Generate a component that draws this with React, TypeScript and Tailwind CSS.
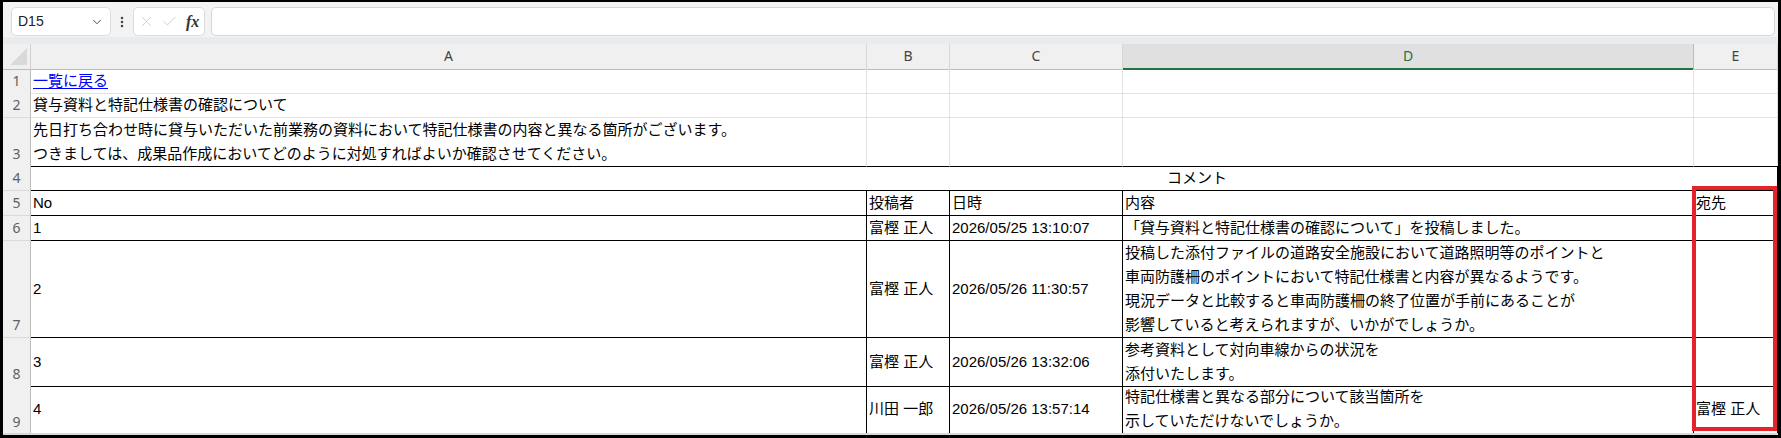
import { ChevronDown, EllipsisVertical, X, Check } from 'lucide-react';

// grid columns: row header, A, B, C, D, E
const cols = 'grid grid-cols-[28px_836px_83px_173px_571px_84px]';

const RowHead = ({ n, last }: { n: number; last?: boolean }) => (
  <div
    className={`flex items-end justify-center border-r border-r-[#bdbdbd] bg-[#f0f0f0] font-['Noto_Sans',sans-serif] text-[14px] leading-[24px] text-[#5f5f5f] ${
      last ? '' : 'border-b border-b-[#dadada]'
    }`}
  >
    {n}
  </div>
);

// plain gridline cell (rows 1-3)
const Grid = ({ children, bottom }: { children?: React.ReactNode; bottom?: boolean }) => (
  <div
    className={`flex items-center border-r border-b border-r-[#e1e1e1] px-[2px] text-[15px] leading-[24px] ${
      bottom ? 'border-b-black' : 'border-b-[#e1e1e1]'
    }`}
  >
    {children}
  </div>
);

// bordered table cell (rows 4-9)
const Cell = ({ children }: { children?: React.ReactNode }) => (
  <div className="flex items-center border-r border-b border-black px-[2px] text-[15px] leading-[24px] whitespace-nowrap">
    <div>{children}</div>
  </div>
);

const comments = [
  {
    no: '1',
    h: 'h-[25px]',
    by: '富樫 正人',
    at: '2026/05/25 13:10:07',
    body: ['\u300c貸与資料と特記仕様書の確認について」を投稿しました。'],
    to: '',
  },
  {
    no: '2',
    h: 'h-[97px]',
    by: '富樫 正人',
    at: '2026/05/26 11:30:57',
    body: [
      '投稿した添付ファイルの道路安全施設において道路照明等のポイントと',
      '車両防護柵のポイントにおいて特記仕様書と内容が異なるようです。',
      '現況データと比較すると車両防護柵の終了位置が手前にあることが',
      '影響していると考えられますが、いかがでしょうか。',
    ],
    to: '',
  },
  {
    no: '3',
    h: 'h-[47px]',
    by: '富樫 正人',
    at: '2026/05/26 13:32:06',
    body: ['参考資料として対向車線からの状況を', '添付いたします。'],
    to: '',
  },
  {
    no: '4',
    h: 'h-[48px]',
    by: '川田 一郎',
    at: '2026/05/26 13:57:14',
    body: ['特記仕様書と異なる部分について該当箇所を', '示していただけないでしょうか。'],
    to: '富樫 正人',
  },
];

export default function App() {
  return (
    <div className="relative h-[438px] w-[1781px] overflow-hidden bg-black pt-[2px] pl-[3px] pr-[3px] font-['Liberation_Sans','Noto_Sans_CJK_JP',sans-serif] text-black">
      <div className="flex flex-col bg-white">
        {/* formula bar */}
        <div className="flex h-[35px] items-start gap-[4px] bg-[#f3f3f3] pt-[5px] pl-[8px] pr-[3px]">
          <div className="flex h-[29px] w-[100px] items-center justify-between rounded-[5px] border border-[#dcdcdc] bg-white pl-[6px] pr-[6px] text-[14px] text-[#222]">
            <span>D15</span>
            <ChevronDown size={14} strokeWidth={1.6} className="text-[#444]" />
          </div>
          <div className="flex h-[29px] items-center">
            <EllipsisVertical size={14} strokeWidth={2.4} className="text-[#444]" />
          </div>
          <div className="flex h-[29px] w-[72px] items-center rounded-[5px] border border-[#dcdcdc] bg-white pl-[4px]">
            <X size={17} strokeWidth={1.1} className="text-[#c4c4c4]" />
            <Check size={17} strokeWidth={1.1} className="ml-[6px] text-[#c4c4c4]" />
            <span className="ml-[8px] font-['Liberation_Serif',serif] text-[16px] font-bold italic leading-none text-[#333]">fx</span>
          </div>
          <div className="ml-[2px] h-[29px] flex-1 rounded-[5px] border border-[#d6d6d6] bg-white" />
        </div>
        <div className="h-[7px] bg-[#e8ecef]" />

        {/* column headers */}
        <div className={`${cols} h-[25px] font-['Noto_Sans',sans-serif] text-[14px] leading-[24px] text-[#444]`}>
          <div className="relative border-r border-b border-r-[#d0d0d0] border-b-[#bdbdbd] bg-[#f0f0f0]">
            <svg className="absolute left-[7px] top-[4px]" width="17" height="17" viewBox="0 0 17 17">
              <path d="M17 0 L17 17 L0 17 Z" fill="#d9d9d9" />
            </svg>
          </div>
          <div className="border-r border-b border-r-[#d6d6d6] border-b-[#bdbdbd] bg-[#f0f0f0] text-center">A</div>
          <div className="border-r border-b border-r-[#d6d6d6] border-b-[#bdbdbd] bg-[#f0f0f0] text-center">B</div>
          <div className="border-r border-b border-r-[#d6d6d6] border-b-[#bdbdbd] bg-[#f0f0f0] text-center">C</div>
          <div className="border-r border-b-2 border-r-[#bdbdbd] border-b-[#217346] bg-[#e0e0e0] text-center text-[#217346]">D</div>
          <div className="border-r border-b border-r-[#d6d6d6] border-b-[#bdbdbd] bg-[#f0f0f0] text-center">E</div>
        </div>

        {/* row 1 */}
        <div className={`${cols} h-[24px]`}>
          <RowHead n={1} />
          <Grid>
            <span className="text-[#0000ff] underline underline-offset-2">一覧に戻る</span>
          </Grid>
          <Grid />
          <Grid />
          <Grid />
          <Grid />
        </div>

        {/* row 2 */}
        <div className={`${cols} h-[25px]`}>
          <RowHead n={2} />
          <Grid>貸与資料と特記仕様書の確認について</Grid>
          <Grid />
          <Grid />
          <Grid />
          <Grid />
        </div>

        {/* row 3 */}
        <div className={`${cols} h-[48px]`}>
          <RowHead n={3} />
          <Grid bottom>
            <div>
              <div>先日打ち合わせ時に貸与いただいた前業務の資料において特記仕様書の内容と異なる箇所がございます。</div>
              <div>つきましては、成果品作成においてどのように対処すればよいか確認させてください。</div>
            </div>
          </Grid>
          <Grid bottom />
          <Grid bottom />
          <Grid bottom />
          <Grid bottom />
        </div>

        {/* row 4: merged heading */}
        <div className={`${cols} h-[25px]`}>
          <RowHead n={4} />
          <div className="col-span-5 flex items-center border-r border-b border-black pl-[1136px] text-[15px] leading-[24px]">
            コメント
          </div>
        </div>

        {/* row 5: table header */}
        <div className={`${cols} h-[25px]`}>
          <RowHead n={5} />
          <Cell>No</Cell>
          <Cell>投稿者</Cell>
          <Cell>日時</Cell>
          <Cell>内容</Cell>
          <Cell>宛先</Cell>
        </div>

        {comments.map((c, i) => (
          <div key={c.no} className={`${cols} ${c.h}`}>
            <RowHead n={6 + i} last={i === comments.length - 1} />
            <Cell>{c.no}</Cell>
            <Cell>{c.by}</Cell>
            <Cell>{c.at}</Cell>
            <Cell>
              {c.body.map((line) => (
                <div key={line}>{line}</div>
              ))}
            </Cell>
            <Cell>{c.to}</Cell>
          </div>
        ))}
        <div className="h-[2px] bg-[#d9d9d9]" />
      </div>

      {/* highlight around the 宛先 column */}
      <div className="absolute left-[1692px] top-[186px] h-[245px] w-[85px] border-4 border-[#e5232a]" />
    </div>
  );
}
